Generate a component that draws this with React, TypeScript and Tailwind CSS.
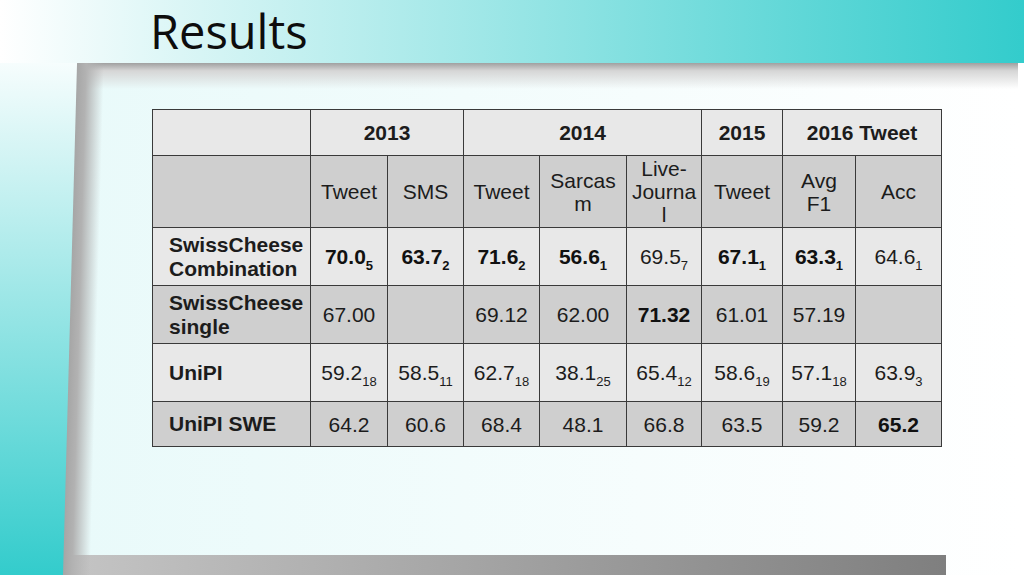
import React from 'react';

type Cell = [string, string?, boolean?];

const light = 'bg-[#e8e8e8]';
const dark = 'bg-[#cfcfcf]';

const rows: { label: string[]; bg: string; h: string; cells: Cell[] }[] = [
  {
    label: ['SwissCheese', 'Combination'],
    bg: light,
    h: 'h-[58px]',
    cells: [
      ['70.0', '5', true],
      ['63.7', '2', true],
      ['71.6', '2', true],
      ['56.6', '1', true],
      ['69.5', '7'],
      ['67.1', '1', true],
      ['63.3', '1', true],
      ['64.6', '1'],
    ],
  },
  {
    label: ['SwissCheese', 'single'],
    bg: dark,
    h: 'h-[58px]',
    cells: [['67.00'], [''], ['69.12'], ['62.00'], ['71.32', undefined, true], ['61.01'], ['57.19'], ['']],
  },
  {
    label: ['UniPI'],
    bg: light,
    h: 'h-[58px]',
    cells: [
      ['59.2', '18'],
      ['58.5', '11'],
      ['62.7', '18'],
      ['38.1', '25'],
      ['65.4', '12'],
      ['58.6', '19'],
      ['57.1', '18'],
      ['63.9', '3'],
    ],
  },
  {
    label: ['UniPI SWE'],
    bg: dark,
    h: 'h-[45px]',
    cells: [['64.2'], ['60.6'], ['68.4'], ['48.1'], ['66.8'], ['63.5'], ['59.2'], ['65.2', undefined, true]],
  },
];

const colWidths = [158, 77, 76, 76, 87, 75, 81, 73, 86];

const td = 'border border-[#3a3a3a] p-0 align-middle';

export default function App() {
  return (
    <div className="w-[1024px] h-[575px] flex flex-col overflow-hidden bg-[#e9fafa]">
      {/* title band */}
      <header className="h-[63px] shrink-0 pl-[150px] pt-[8px] bg-[linear-gradient(to_right,#ffffff,#33cccc)]">
        <h1 className="text-[47px] leading-none text-[#0d0d0d] font-['Open_Sans',sans-serif]">Results</h1>
      </header>

      <div className="flex flex-1 min-h-0">
        {/* left slanted bar */}
        <aside className="relative z-10 w-[80px] shrink-0">
          <div className="absolute top-0 bottom-0 left-[-20px] w-[112px] origin-bottom skew-x-[-1.57deg] bg-[linear-gradient(to_right,#a6a6a6_83px,#b2b2b2_92px,rgba(233,250,250,0)_110px)]" />
          <div className="absolute top-0 bottom-0 left-[-20px] w-[83px] origin-bottom skew-x-[-1.57deg] bg-[linear-gradient(to_bottom,#f6fdfd,#33cccc)]" />
        </aside>

        {/* content */}
        <main className="relative flex-1 flex flex-col bg-[linear-gradient(to_right,#e9fafa,#ffffff)]">
          <div className="absolute top-0 left-0 right-[6px] h-[26px] bg-[linear-gradient(to_bottom,#a0a0a0,#d6d6d6_30%,rgba(255,255,255,0))]" />

          <div className="relative pl-[72px] pt-[46px]">
            <table className="table-fixed border-collapse w-[789px] text-[21px] leading-[23px] text-[#1c1c1c] font-['Liberation_Sans',Arial,sans-serif]">
              <colgroup>
                {colWidths.map((w, i) => (
                  <col key={i} style={{ width: w }} />
                ))}
              </colgroup>
              <tbody>
                <tr className="h-[46px]">
                  <td className={`${td} ${light}`} />
                  <td colSpan={2} className={`${td} ${light} text-center font-bold`}>2013</td>
                  <td colSpan={3} className={`${td} ${light} text-center font-bold`}>2014</td>
                  <td className={`${td} ${light} text-center font-bold`}>2015</td>
                  <td colSpan={2} className={`${td} ${light} text-center font-bold`}>2016 Tweet</td>
                </tr>
                <tr className="h-[72px]">
                  <td className={`${td} ${dark}`} />
                  <td className={`${td} ${dark} text-center`}>Tweet</td>
                  <td className={`${td} ${dark} text-center`}>SMS</td>
                  <td className={`${td} ${dark} text-center`}>Tweet</td>
                  <td className={`${td} ${dark} text-center`}>
                    Sarcas<br />m
                  </td>
                  <td className={`${td} ${dark} text-center`}>
                    Live-<br />Journa<br />l
                  </td>
                  <td className={`${td} ${dark} text-center`}>Tweet</td>
                  <td className={`${td} ${dark} text-center`}>
                    Avg<br />F1
                  </td>
                  <td className={`${td} ${dark} text-center`}>Acc</td>
                </tr>
                {rows.map((r, ri) => (
                  <tr key={ri} className={r.h}>
                    <td className={`${td} ${r.bg} pl-[16px] font-bold leading-[24px]`}>
                      {r.label.map((l, li) => (
                        <div key={li}>{l}</div>
                      ))}
                    </td>
                    {r.cells.map(([v, sub, bold], ci) => (
                      <td key={ci} className={`${td} ${r.bg} text-center whitespace-nowrap ${bold ? 'font-bold text-[#111]' : ''}`}>
                        {v}
                        {sub && <sub className="text-[13px] bottom-[-6px]">{sub}</sub>}
                      </td>
                    ))}
                  </tr>
                ))}
              </tbody>
            </table>
          </div>

          <div className="mt-auto ml-[-8px] h-[20px] w-[874px] bg-[linear-gradient(to_right,#c4c4c4,#7f7f7f)]" />
        </main>
      </div>
    </div>
  );
}
